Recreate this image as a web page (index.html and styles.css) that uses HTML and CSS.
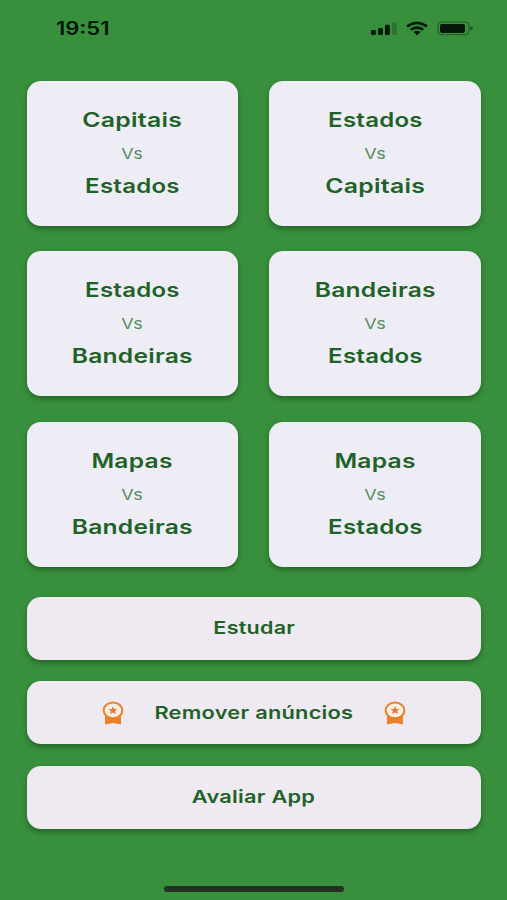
FILE: index.html
```html
<!DOCTYPE html>
<html lang="pt-BR">
<head>
<meta charset="utf-8">
<title>Estados e Capitais</title>
<link rel="stylesheet" href="styles.css">
</head>
<body>
<svg class="defs" width="0" height="0" aria-hidden="true">
  <symbol id="award" viewBox="0 0 22 24">
    <path d="M3 12V23.4L11 22L19 23.4V12Z" fill="#e98328"/>
    <ellipse cx="11" cy="9.4" rx="9.3" ry="7.9" fill="#f8eee8" stroke="#e98328" stroke-width="2.1"/>
    <path d="M11 5.2L12.2 8L15.6 8.2L13 10.1L13.9 13L11 11.4L8.1 13L9 10.1L6.4 8.2L9.8 8Z" fill="#e47b2c"/>
  </symbol>
</svg>
<header class="status">
  <span class="time">19:51</span>
  <svg class="signals" width="106" height="18" viewBox="0 0 106 18">
    <g fill="#04180a">
      <rect x="3" y="10" width="4.8" height="5" rx="1.3"/>
      <rect x="10" y="8" width="4.8" height="7" rx="1.3"/>
      <rect x="17" y="4.8" width="4.8" height="10.2" rx="1.3"/>
      <rect x="24" y="2.5" width="4.8" height="12.5" rx="1.3" opacity=".25"/>
      <rect x="72" y="3.9" width="25" height="9" rx="1.8"/>
    </g>
    <g fill="none" stroke="#04180a">
      <path d="M39.1 6.3Q49 -.6 58.9 6.3" stroke-width="2.7"/>
      <path d="M42.8 9.8Q49 5.4 55.2 9.8" stroke-width="2.5"/>
      <rect x="70" y="2.1" width="31" height="12.6" rx="3.6" opacity=".45"/>
    </g>
    <path d="M45.4 12Q49 9.6 52.6 12L49 15.2Z" fill="#04180a"/>
    <path d="M102.4 6.3Q105 7 105 8.3T102.4 10.3Z" fill="#04180a" opacity=".55"/>
  </svg>
</header>
<main>
  <section class="modes">
    <button class="card"><b class="word capitais">Capitais</b><span class="vs">Vs</span><b class="word estados">Estados</b></button>
    <button class="card"><b class="word estados">Estados</b><span class="vs">Vs</span><b class="word capitais">Capitais</b></button>
    <button class="card"><b class="word estados">Estados</b><span class="vs">Vs</span><b class="word bandeiras">Bandeiras</b></button>
    <button class="card"><b class="word bandeiras">Bandeiras</b><span class="vs">Vs</span><b class="word estados">Estados</b></button>
    <button class="card"><b class="word mapas">Mapas</b><span class="vs">Vs</span><b class="word bandeiras">Bandeiras</b></button>
    <button class="card"><b class="word mapas">Mapas</b><span class="vs">Vs</span><b class="word estados">Estados</b></button>
  </section>
  <section class="actions">
    <button class="action"><span class="label estudar">Estudar</span></button>
    <button class="action premium">
      <svg class="award" width="22" height="24"><use href="#award"/></svg>
      <span class="label remover">Remover anúncios</span>
      <svg class="award" width="22" height="24"><use href="#award"/></svg>
    </button>
    <button class="action"><span class="label avaliar">Avaliar App</span></button>
  </section>
</main>
<div class="home-bar"></div>
</body>
</html>
```
FILE: styles.css
```css
* { box-sizing: border-box; }
body {
  margin: 0;
  height: 900px;
  display: flex;
  flex-direction: column;
  overflow: hidden;
  background: #388f3c;
  font-family: Inter, "Liberation Sans", sans-serif;
}
.defs { display: block; flex: none; }
.status {
  height: 80.6px;
  padding: 20px 33px 0 56px;
  display: flex;
  justify-content: space-between;
  align-items: flex-start;
  color: #04180a;
}
.time {
  font-size: 18px;
  line-height: 18px;
  font-weight: 600;
  transform: scaleX(1.22);
  transform-origin: left;
}
.signals { display: block; }
main { padding: 0 26px 0 26.5px; }
.modes {
  display: grid;
  grid-template-columns: 1fr 1fr;
  column-gap: 31px;
  row-gap: 25.5px;
}
button {
  border: 0;
  padding: 0;
  margin: 0;
  font: inherit;
  color: #1f6228;
  box-shadow: 0 3px 5px rgba(10, 50, 15, .42);
}
.card {
  height: 145px;
  display: flex;
  flex-direction: column;
  align-items: center;
  justify-content: center;
  border-radius: 14px;
  background: #eeedf5;
}
.word {
  font-size: 20px;
  line-height: 33px;
  font-weight: 600;
  letter-spacing: .2px;
}
.vs {
  font-size: 15px;
  line-height: 33px;
  color: #558e60;
  letter-spacing: .5px;
  transform: scaleX(1.2);
}
.capitais { transform: scaleX(1.24); }
.estados { transform: scaleX(1.2); }
.bandeiras { transform: scaleX(1.23); }
.mapas { transform: scaleX(1.23); }
.actions {
  margin-top: 30px;
  display: flex;
  flex-direction: column;
  gap: 21.5px;
}
.action {
  height: 63px;
  display: flex;
  align-items: center;
  justify-content: center;
  border-radius: 14px;
  background: #efeaf2;
}
.label {
  font-size: 17.5px;
  line-height: 24px;
  font-weight: 600;
  letter-spacing: .2px;
  white-space: nowrap;
}
.premium {
  justify-content: space-between;
  padding: 0 75px;
}
.estudar { transform: scaleX(1.23); }
.remover { transform: scaleX(1.245); }
.avaliar { transform: scaleX(1.245); }
.home-bar {
  width: 180px;
  height: 6px;
  margin: auto auto 8px;
  border-radius: 3px;
  background: #26301f;
}
```
